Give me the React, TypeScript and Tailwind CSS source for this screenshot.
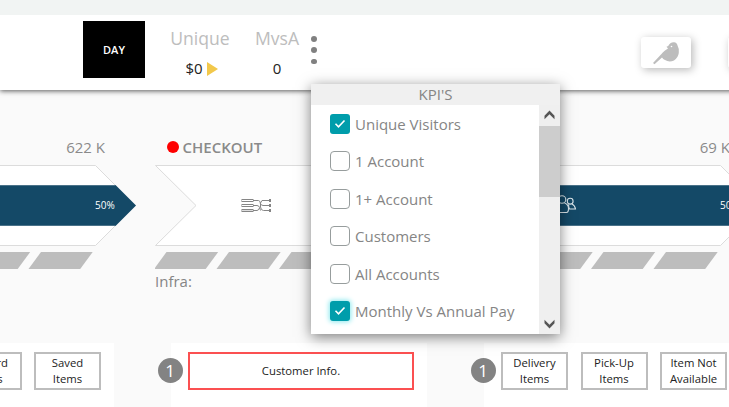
import React from "react";

type Stage = {
  title: string;
  count: string;
  filled: boolean;
  icon: "none" | "flow" | "people";
  infra: string;
};

const stages: Stage[] = [
  { title: "", count: "622 K", filled: true, icon: "none", infra: "" },
  { title: "CHECKOUT", count: "", filled: false, icon: "flow", infra: "Infra:" },
  { title: "", count: "69 K", filled: true, icon: "people", infra: "" },
];

const kpis = [
  { label: "Unique Visitors", checked: true, focus: false },
  { label: "1 Account", checked: false, focus: false },
  { label: "1+ Account", checked: false, focus: false },
  { label: "Customers", checked: false, focus: false },
  { label: "All Accounts", checked: false, focus: false },
  { label: "Monthly Vs Annual Pay", checked: true, focus: true },
];

function FlowIcon() {
  return (
    <g fill="none" stroke="#858585" strokeWidth="1">
      <rect x="87" y="34.500" width="11" height="2" />
      <rect x="87" y="39.500" width="11" height="2" />
      <rect x="87" y="44.500" width="11" height="2" fill="#ddd" />
      <path d="M98 35.500h5.500q1.500 0 2 3v3.500q.5 3.500 3 3.500h6M98 40.500h4q2 0 2.500 2l1 3M98 45.500h4q1.500 0 2.500-2.500M105.500 38l1.500-2.500h7.500M105 38q1 2.500 3 2.500h6.500" />
      <path d="M115 34v3M115 39v3M115 44v3" strokeWidth="2" />
    </g>
  );
}

function PeopleIcon() {
  return (
    <g fill="none" stroke="#dce6eb" strokeWidth="1.100">
      <circle cx="95" cy="34.500" r="3.800" />
      <path d="M88 47.500v-3q0-5 4.500-6.500M97.500 38q4 1.500 4 5.500 0 4-2 4H88" />
      <circle cx="103.200" cy="36.200" r="2.900" />
      <path d="M101.500 39.500q0 2 1 4.500h6q-.5-3.500-3.500-5" />
    </g>
  );
}

function Arrow({ stage }: { stage: Stage }) {
  return (
    <svg className="block h-[81px] w-[294px] overflow-visible" viewBox="0 0 294 81">
      <path d="M.5.5H253.500L293.500 40.500L253.500 80.500H.5L41 40.500Z" fill="#fff" stroke="#dcdcdc" />
      {stage.filled && (
        <>
          <path d="M20 20H273.500L294 40.500L273.500 61H20L41 40.500Z" fill="#144967" />
          <path d="M20 20.500H273.500M20 60.500H273.500" stroke="#4a7289" />
          <text x="253" y="44" fontSize="10" fill="#fff">50%</text>
        </>
      )}
      {stage.icon === "flow" && <FlowIcon />}
      {stage.icon === "people" && <PeopleIcon />}
    </svg>
  );
}

function StageColumn({ stage }: { stage: Stage }) {
  return (
    <section className="w-[312.5px] shrink-0">
      <div className="mb-[7px] flex h-[22px] w-[263px] items-center pl-[12.5px] text-[15px] text-[#8a8a8a]">
        {stage.title && (
          <>
            <span className="mr-[3.5px] size-3 rounded-full bg-[#fe0000]" />
            <span className="text-[15px] font-semibold">{stage.title}</span>
          </>
        )}
        <span className="ml-auto">{stage.count}</span>
      </div>
      <Arrow stage={stage} />
      <svg className="mt-1.5 block h-[17px] w-[252px]" viewBox="0 0 252 17">
        {[0, 62.5, 125, 187.5].map((x) => (
          <path key={x} d={`M${x + 11.5} 0H${x + 63.2}L${x + 50.7} 17H${x - 1}Z`} fill="#bdbdbd" />
        ))}
      </svg>
      <div className="mt-[1px] h-[22px] pl-[0.5px] text-[15px] leading-[22px] text-[#858585]">{stage.infra}</div>
    </section>
  );
}

function StepCard({ items, error }: { items: string[][]; error?: boolean }) {
  return (
    <div className="relative mr-[57px] flex h-16 w-64 shrink-0 justify-between bg-white pl-[17px] pr-[13px] pt-[9px]">
      <span className="absolute left-[-13.5px] top-[15px] flex size-[25px] items-center justify-center rounded-full bg-[#838383] text-[17px] leading-none text-white">1</span>
      {items.map((lines) => (
        <div
          key={lines.join(" ")}
          className={`flex h-[38px] flex-col items-center justify-center border-2 text-[11.3px] leading-4 text-[#222] ${error ? "w-full border-[#fb5051]" : "w-[67px] border-[#bdbdbd]"}`}
        >
          {lines.map((line) => (
            <span key={line} className="whitespace-nowrap">{line}</span>
          ))}
        </div>
      ))}
    </div>
  );
}

function Checkbox({ checked, focus }: { checked: boolean; focus: boolean }) {
  if (!checked) return <span className="size-5 shrink-0 rounded-[4px] border border-[#979d9d] bg-white" />;
  return (
    <span className={`flex size-5 shrink-0 items-center justify-center rounded-[3px] bg-[#009dab] ${focus ? "shadow-[0_0_5px_1px_#8be8ee]" : ""}`}>
      <svg className="size-5" viewBox="0 0 20 20" fill="none" stroke="#fff" strokeWidth="1.6">
        <path d="M5.500 9.800l3 3L14.500 6.500" />
      </svg>
    </span>
  );
}

function Chevron({ down }: { down?: boolean }) {
  return (
    <svg className={`h-[21px] w-[21px] ${down ? "rotate-180" : ""}`} viewBox="0 0 21 21">
      <path d="M10.500 5.500L15.500 10.800V14.200L10.500 9.200L5.500 14.200V10.800Z" fill="#555" />
    </svg>
  );
}

function KpiMenu() {
  return (
    <div className="absolute left-[311px] top-[84px] flex h-[250px] w-[249px] flex-col bg-white text-[15px] text-[#858585] shadow-[0_3px_13px_rgba(0,0,0,0.5)]">
      <div className="h-[21px] bg-[#f0f0f0] text-center leading-[21px]">KPI'S</div>
      <div className="flex grow">
        <div className="grow pl-[19px]">
          {kpis.map((kpi) => (
            <div key={kpi.label} className="flex h-[37.5px] items-center gap-[5px]">
              <Checkbox checked={kpi.checked} focus={kpi.focus} />
              <span className="whitespace-nowrap">{kpi.label}</span>
            </div>
          ))}
        </div>
        <div className="flex w-[21px] flex-col bg-[#efefef]">
          <Chevron />
          <div className="h-[71px] bg-[#cdcdcd]" />
          <div className="mt-auto h-[21px]">
            <Chevron down />
          </div>
        </div>
      </div>
    </div>
  );
}

function Header() {
  return (
    <header className="flex h-[75px] w-[790px] bg-white pl-[83px] shadow-[0_1px_5px_rgba(0,0,0,0.65)]">
      <div className="mt-1.5 flex h-[57px] w-[62px] items-center justify-center bg-black pt-px text-[11px] font-semibold text-white">DAY</div>
      <div className="ml-[25px] mt-[11px] w-[60px] text-center">
        <div className="text-[17.6px] leading-6 text-[#bdbdbd]">Unique</div>
        <div className="mt-[7px] flex h-[22px] items-center justify-center gap-1 pl-[3px] text-[15px] text-[#222]">
          $0
          <svg className="mt-px h-[14px] w-[11px]" viewBox="0 0 11 14"><path d="M0 0L11 7L0 14Z" fill="#f2c84b" /></svg>
        </div>
      </div>
      <div className="ml-[22px] mt-[11px] w-[50px] text-center">
        <div className="text-[17.6px] leading-6 text-[#bdbdbd]">MvsA</div>
        <div className="mt-[7px] text-[15px] leading-[22px] text-[#222]">0</div>
      </div>
      <div className="ml-[9px] mt-[21px] flex h-7 w-[6px] flex-col justify-between">
        <span className="size-[5.5px] rounded-full bg-[#808080]" />
        <span className="size-[5.5px] rounded-full bg-[#808080]" />
        <span className="size-[5.5px] rounded-full bg-[#808080]" />
      </div>
      <div className="ml-auto mt-[22px] flex gap-[37px] pr-[12px]">
        <div className="h-[31px] w-[50px] rounded-[3px] bg-white shadow-[2px_2px_8px_rgba(0,0,0,0.28)]">
          <svg className="h-[31px] w-[50px]" viewBox="0 0 50 31">
            <path d="M12 26L20 17.500Q22 15 24 13.500L27 11.500L25.500 9.800L27.200 9Q29 5 33 5.200Q36 5.500 36.700 9Q38.500 12 37.800 16Q37 21 33 23.500Q28 25.500 24 23Q22 22 21 20.500L13.500 27.300Z" fill="#bdbdbd" />
            <circle cx="30.500" cy="9.500" r=".8" fill="#fff" />
          </svg>
        </div>
        <div className="h-[31px] w-[50px] rounded-[3px] bg-white shadow-[2px_2px_8px_rgba(0,0,0,0.28)]" />
      </div>
    </header>
  );
}

export default function App() {
  return (
    <div className="relative h-[407px] w-[729px] overflow-hidden bg-[#fafafa] font-['Open_Sans',sans-serif]">
      <div className="relative h-[15px] bg-[#f1f4f3]" />
      <Header />
      <main>
        <div className="-ml-[158px] mt-[46px] flex">
          {stages.map((stage, i) => (
            <StageColumn key={i} stage={stage} />
          ))}
        </div>
        <div className="-ml-[142px] mt-[51px] flex">
          <StepCard items={[["View", "Cart"], ["Reward", "Items"], ["Saved", "Items"]]} />
          <StepCard items={[["Customer Info."]]} error />
          <StepCard items={[["Delivery", "Items"], ["Pick-Up", "Items"], ["Item Not", "Available"]]} />
        </div>
      </main>
      <KpiMenu />
    </div>
  );
}
